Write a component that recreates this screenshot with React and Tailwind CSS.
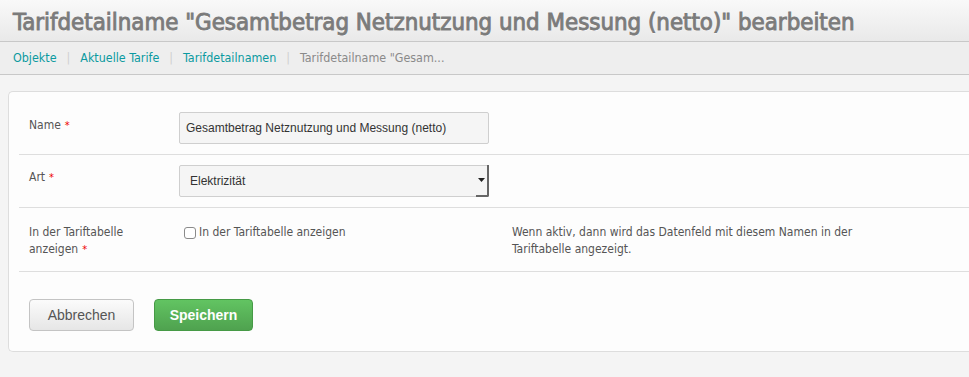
import React from 'react';

const labelFont = { fontFamily: '"DejaVu Sans Condensed", "DejaVu Sans", Verdana, sans-serif' };

function Required() {
  return <span className="text-[#e00] ml-1 text-[11px]">*</span>;
}

export default function App() {
  const crumbs = ['Objekte', 'Aktuelle Tarife', 'Tarifdetailnamen'];
  return (
    <div className="min-h-[377px] w-[969px] bg-[#f4f4f4] overflow-hidden">
      <div className="h-[42px] bg-gradient-to-b from-[#f9f9f9] to-[#e9e9e9] border-b border-[#c8c8c8] flex items-center pl-[13px] pt-[5px]">
        <h1
          className="text-[23.8px] text-[#7b7b7b] whitespace-nowrap [text-shadow:0_1px_0_#fff] [-webkit-text-stroke:0.9px_#7b7b7b]"
          style={labelFont}
        >
          Tarifdetailname "Gesamtbetrag Netznutzung und Messung (netto)" bearbeiten
        </h1>
      </div>
      <div className="h-[33px] bg-[#eeeeee] border-b border-[#c8c8c8] flex items-center pl-[13px] text-[12.4px]" style={labelFont}>
        {crumbs.map((c) => (
          <React.Fragment key={c}>
            <a className="text-[#0b9aa0]">{c}</a>
            <span className="text-[#d0d0d0] mx-[10px]">|</span>
          </React.Fragment>
        ))}
        <span className="text-[#8a8a8a]">Tarifdetailname "Gesam...</span>
      </div>

      <div className="mt-[16px] ml-[8px] bg-[#fdfdfd] border border-r-0 border-[#dddddd] rounded-l-[5px] pl-[10px] pt-[20px] pb-[20px]">
        <div className="flex items-start h-[43px] border-b border-[#dedede]">
          <div className="w-[160px] pl-[10px] pt-[4px] text-[12px] text-[#555]" style={labelFont}>
            Name<Required />
          </div>
          <div className="w-[310px] h-[32px] bg-[#f5f5f5] border border-[#cfcfcf] rounded-[2px] flex items-center px-[6px] text-[12px] text-[#333] font-['Liberation_Sans',Arial,sans-serif]">
            Gesamtbetrag Netznutzung und Messung (netto)
          </div>
        </div>

        <div className="flex items-center h-[53px] border-b border-[#dedede]">
          <div className="w-[160px] pl-[10px] text-[12px] text-[#555] -mt-[8px]" style={labelFont}>
            Art<Required />
          </div>
          <div className="w-[310px] h-[32px] bg-[#f5f5f5] border border-[#cfcfcf] rounded-[2px] flex items-center justify-between pl-[10px] text-[12px] text-[#333] font-['Liberation_Sans',Arial,sans-serif]">
            <span>Elektrizität</span>
            <span className="h-[32px] w-[13px] -mr-[1px] border-r-[2px] border-b-[2px] border-[#666] rounded-br-[2px] flex items-center justify-center">
              <svg width="7" height="4" viewBox="0 0 7 4"><path d="M0 0h7L3.5 4z" fill="#222" /></svg>
            </span>
          </div>
        </div>

        <div className="flex items-start h-[64px] border-b border-[#dedede] pt-[16px]">
          <div className="w-[160px] pl-[10px] text-[12px] leading-[17px] text-[#555]" style={labelFont}>
            In der Tariftabelle<br />anzeigen<Required />
          </div>
          <label className="w-[333px] pl-[5px] flex items-center gap-[3px] text-[12px] leading-[17px] text-[#555]" style={labelFont}>
            <span className="w-[12px] h-[12px] border border-[#8a8a8a] rounded-[3px] bg-white"></span>
            In der Tariftabelle anzeigen
          </label>
          <div className="w-[350px] text-[12px] leading-[17px] text-[#555]" style={labelFont}>
            Wenn aktiv, dann wird das Datenfeld mit diesem Namen in der Tariftabelle angezeigt.
          </div>
        </div>

        <div className="flex gap-[20px] pl-[10px] pt-[27px] font-['Liberation_Sans',Arial,sans-serif]">
          <button className="w-[105px] h-[32px] rounded-[4px] border border-[#c4c4c4] bg-gradient-to-b from-[#fbfbfb] to-[#e6e6e6] text-[14px] text-[#555]">
            Abbrechen
          </button>
          <button className="w-[99px] h-[32px] rounded-[4px] border border-[#469a46] bg-gradient-to-b from-[#62c462] to-[#4fa24f] text-[14px] font-bold text-white">
            Speichern
          </button>
        </div>
      </div>
    </div>
  );
}
